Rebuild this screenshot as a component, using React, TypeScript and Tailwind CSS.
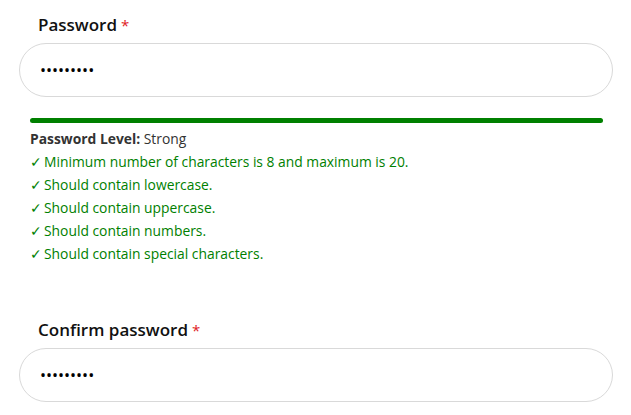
import React from 'react';

const rules = [
  'Minimum number of characters is 8 and maximum is 20.',
  'Should contain lowercase.',
  'Should contain uppercase.',
  'Should contain numbers.',
  'Should contain special characters.',
];

const Field: React.FC<{ label: string }> = ({ label }) => (
  <div>
    <label className="block pl-[38px] text-[17px] font-semibold leading-[24px] text-[#111]">
      {label}<span className="ml-[4px] text-[15px] font-normal text-[#e0201e]">*</span>
    </label>
    <div className="mt-[6px] ml-[19px] mr-[18px] h-[54px] rounded-full border border-[#d9d9d9] bg-white flex items-center px-[20px]">
      <input
        type="password"
        readOnly
        value="123456789"
        className="w-full bg-transparent outline-none text-[16px] text-black"
      />
    </div>
  </div>
);

export default function App() {
  return (
    <div className="w-[631px] h-[415px] bg-white pt-[13px] font-['Open_Sans',sans-serif] overflow-hidden">
      <Field label="Password" />

      <div className="px-[30px] pt-[21px]">
        <div className="h-[5px] w-[573px] rounded-full bg-[#008000]" />
        <div className="mt-[4px] text-[13.85px] leading-[23px]">
          <div className="text-[#333]">
            <span className="font-bold">Password Level:</span> Strong
          </div>
          {rules.map((r) => (
            <div key={r} className="text-[#008000]">
              <span className="inline-block w-[14px]">✓</span>{r}
            </div>
          ))}
        </div>
      </div>

      <div className="pt-[53px]">
        <Field label="Confirm password" />
      </div>
    </div>
  );
}
